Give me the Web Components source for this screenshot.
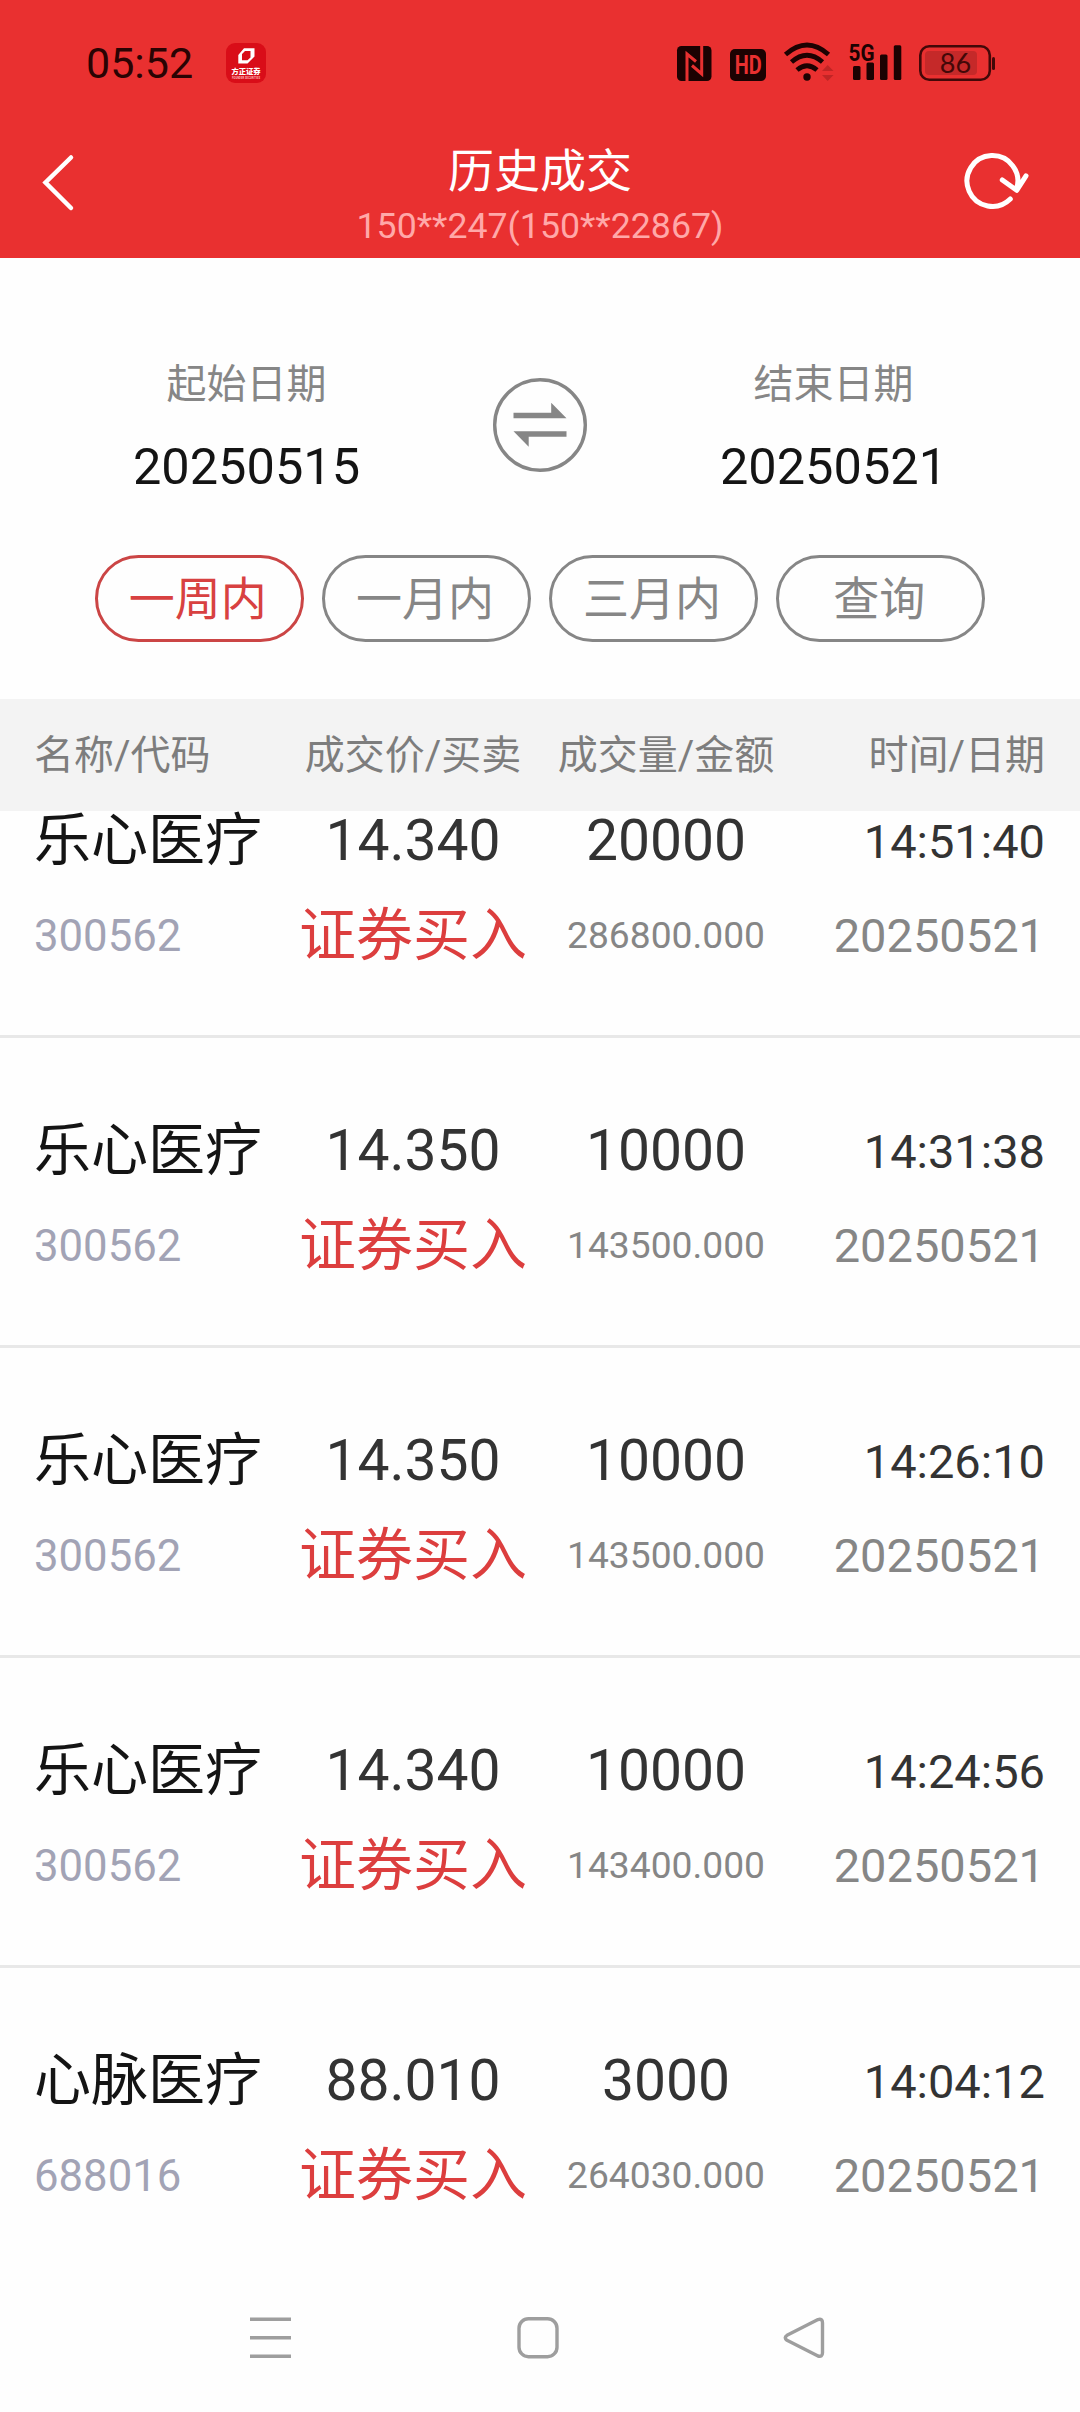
<!DOCTYPE html>
<html lang="zh-CN">
<head>
<meta charset="UTF-8">
<title>历史成交</title>
<style>
    body{
        margin: 0;
        background: #fefefe;
        font-family: Roboto, "Noto Sans CJK SC", sans-serif;
    }
</style>
</head>
<body>
<trade-history></trade-history>

<script>
class BaseElement extends HTMLElement{
    constructor(){
        super();
        this.attachShadow({mode: 'open'});
    }
    connectedCallback(){
        const template = document.createElement('template');
        template.innerHTML = this.getTemplate() + this.getStyles();
        this.shadowRoot.appendChild(template.content.cloneNode(true));
    }
}

class StatusBar extends BaseElement{
    getTemplate(){
        return `
            <time>05:52</time>
            <svg class="app" width="40" height="40" viewBox="0 0 40 40">
                <rect width="40" height="40" rx="9" fill="#d90d18"/>
                <path fill="#fff" fill-rule="evenodd" d="M18 5.300H28.500V13.500L21.500 20.500H12.300V12ZM19 8 16 11V17.300H21.500L24.500 14.500V8Z"/>
                <text x="20" y="31.200" font-size="7.300" font-weight="900" text-anchor="middle" fill="#fff">方正证券</text>
                <text x="20" y="35.500" font-size="2.600" font-weight="700" text-anchor="middle" fill="#fbb" textLength="28">FOUNDER SECURITIES</text>
            </svg>
            <svg class="icons" width="320" height="52" viewBox="676 36 320 52">
                <!-- nfc -->
                <rect x="677" y="45" width="34.500" height="35" rx="4.500" fill="#1c0202"/>
                <path d="M687 80V53L696 60.500M701.700 45V73L692 64.500" fill="none" stroke="#e93030" stroke-width="3"/>
                <!-- hd -->
                <rect x="730" y="48" width="36" height="32" rx="5" fill="#1c0202"/>
                <text x="748.300" y="73" font-size="25" font-weight="700" text-anchor="middle" fill="#e93030" textLength="27" lengthAdjust="spacingAndGlyphs">HD</text>
                <!-- wifi -->
                <g fill="none" stroke="#1c0202" stroke-width="4.800">
                    <path d="M785.500 53.500Q807 34.500 828.500 53.500"/>
                    <path d="M791.500 61Q807 47.500 822.500 61"/>
                    <path d="M797 69Q807 60.500 817 69"/>
                </g>
                <circle cx="807" cy="76" r="3.700" fill="#1c0202"/>
                <path d="M822 70 827.700 64 833.500 70ZM822 74H833.500L827.700 80Z" fill="#c12525"/>
                <!-- signal -->
                <text x="848.500" y="60" font-size="24" font-weight="700" fill="#1c0202" textLength="26" lengthAdjust="spacingAndGlyphs">5G</text>
                <g fill="#1c0202">
                    <rect x="853" y="65" width="7.500" height="14" rx="1.500"/>
                    <rect x="866.500" y="61.500" width="7.500" height="17.500" rx="1.500"/>
                    <rect x="880" y="53.500" width="7.500" height="25.500" rx="1.500"/>
                    <rect x="893.800" y="44.300" width="7.500" height="34.700" rx="1.500"/>
                </g>
                <!-- battery -->
                <rect x="920.300" y="45.200" width="69.500" height="33.500" rx="9" fill="none" stroke="#430808" stroke-width="2.600"/>
                <rect x="925" y="50" width="52" height="24" rx="4" fill="#c52929"/>
                <rect x="992" y="56" width="3" height="13" rx="1.500" fill="#430808"/>
                <text x="955.500" y="72" font-family="Lato" font-size="27" text-anchor="middle" fill="#430808">86</text>
            </svg>
        `;
    }
    getStyles(){
        return `
            <style>
                :host{
                    display: flex;
                    align-items: center;
                    height: 125px;
                    padding: 0 84px 0 86px;
                    box-sizing: border-box;
                }
                time{
                    width: 105px;
                    font-size: 43px;
                    color: #2a0303;
                    white-space: nowrap;
                }
                .app{ margin-left: 35px; }
                .icons{
                    margin-left: auto;
                    overflow: visible;
                }
            </style>
        `;
    }
}

class NavHeader extends BaseElement{
    getTemplate(){
        return `
            <svg width="36" height="60" viewBox="40 152 36 60">
                <path d="M71 157.500 45.500 182.500 71 208" fill="none" stroke="#fff" stroke-width="4.500" stroke-linecap="round"/>
            </svg>
            <div>
                <h1><slot name="title"></slot></h1>
                <p><slot name="account"></slot></p>
            </div>
            <svg width="70" height="62" viewBox="960 152 70 62">
                <path d="M1010.300 199A25.400 25.400 0 1 1 1016.500 189M1002.300 180 1016.700 190.300 1026 175.800" fill="none" stroke="#fff" stroke-width="5" stroke-linecap="round" stroke-linejoin="round"/>
            </svg>
        `;
    }
    getStyles(){
        return `
            <style>
                :host{
                    display: grid;
                    grid-template-columns: 70px 1fr 70px;
                    height: 133px;
                    padding: 0 50px 0 40px;
                    box-sizing: border-box;
                }
                svg{ margin-top: 27px; }
                div{
                    padding: 21px 0 0 10px;
                    text-align: center;
                }
                h1{
                    margin: 0;
                    font-size: 46px;
                    font-weight: 400;
                    line-height: 50px;
                    color: #fff;
                }
                p{
                    margin: 8px 0 0;
                    font-size: 35.700px;
                    line-height: 44px;
                    color: #ffa8a8;
                }
            </style>
        `;
    }
}

class DateField extends BaseElement{
    getTemplate(){
        return `
            <span><slot name="label"></slot></span>
            <strong><slot></slot></strong>
        `;
    }
    getStyles(){
        return `
            <style>
                :host{
                    display: flex;
                    flex-direction: column;
                    align-items: center;
                }
                span{
                    font-size: 40px;
                    line-height: 51px;
                    color: #868686;
                }
                strong{
                    margin-top: 27px;
                    font-size: 50.500px;
                    font-weight: 400;
                    line-height: 60px;
                    color: #141414;
                }
            </style>
        `;
    }
}

class DateRange extends BaseElement{
    getTemplate(){
        return `
            <slot name="start"></slot>
            <svg width="94" height="94" viewBox="493 378 94 94">
                <circle cx="540" cy="425" r="45.300" fill="none" stroke="#868686" stroke-width="3.400"/>
                <path d="M513.500 412.800H551.200V402.800L566.500 418.300H513.500ZM566.500 436.800H528.700V446.800L513.500 431.300H566.500Z" fill="#868686"/>
            </svg>
            <slot name="end"></slot>
        `;
    }
    getStyles(){
        return `
            <style>
                :host{
                    display: grid;
                    grid-template-columns: 493px 94px 493px;
                    padding-top: 101px;
                    height: 297px;
                    box-sizing: border-box;
                }
                svg{ margin-top: 19px; }
            </style>
        `;
    }
}

class RangeTab extends BaseElement{
    getTemplate(){
        return `<slot></slot>`;
    }
    getStyles(){
        return `
            <style>
                :host{
                    display: block;
                    width: 209.500px;
                    height: 87px;
                    padding-right: 3px;
                    box-sizing: border-box;
                    border: 3px solid #868686;
                    border-radius: 44px;
                    text-align: center;
                    font-size: 46px;
                    line-height: 82px;
                    color: #868686;
                }
                :host([active]){
                    border-color: #cb4545;
                    color: #d84141;
                }
            </style>
        `;
    }
}

class TabList extends BaseElement{
    getTemplate(){
        return `<slot></slot>`;
    }
    getStyles(){
        return `
            <style>
                :host{
                    display: flex;
                    justify-content: center;
                    gap: 17.600px;
                    height: 144px;
                }
            </style>
        `;
    }
}

class TableHead extends BaseElement{
    getTemplate(){
        return `
            <span>名称/代码</span>
            <span>成交价/买卖</span>
            <span>成交量/金额</span>
            <span>时间/日期</span>
        `;
    }
    getStyles(){
        return `
            <style>
                :host{
                    display: grid;
                    grid-template-columns: 253px 252px 254px 252px;
                    padding: 0 35px 0 34px;
                    height: 112px;
                    background: #f3f3f3;
                    font-size: 40px;
                    line-height: 114px;
                    color: #7d7d7d;
                    text-align: center;
                    white-space: nowrap;
                }
                span:first-of-type{ text-align: left; }
                span:last-of-type{ text-align: right; }
            </style>
        `;
    }
}

class TradeRow extends BaseElement{
    getTemplate(){
        const get = name => this.getAttribute(name);
        return `
            <span class="name">${get('name')}</span>
            <span class="price">${get('price')}</span>
            <span class="price">${get('volume')}</span>
            <span class="time">${get('time')}</span>
            <span class="code">${get('code')}</span>
            <span class="side">证券买入</span>
            <span class="amount">${get('amount')}</span>
            <span class="date">20250521</span>
        `;
    }
    getStyles(){
        return `
            <style>
                :host{
                    display: grid;
                    grid-template-columns: 253px 252px 254px 252px;
                    grid-template-rows: 95px 95px;
                    height: 310px;
                    padding: 65px 35px 0 34px;
                    box-sizing: border-box;
                    border-bottom: 3px solid #e8e8e8;
                    line-height: 96px;
                    text-align: center;
                    white-space: nowrap;
                }
                .name{ font-size: 57px; color: #141414; text-align: left; }
                .price{ font-size: 57px; color: #333; }
                .time{ font-size: 47px; color: #333; text-align: right; line-height: 97px; }
                .code{ font-size: 43.700px; color: #a2a3b5; text-align: left; }
                .side{ font-size: 57px; color: #dc3e3e; }
                .amount{ font-size: 37.200px; color: #868686; line-height: 94px; }
                .date{ font-size: 47px; color: #868686; text-align: right; }
            </style>
        `;
    }
}

class TradeList extends BaseElement{
    getTemplate(){
        return `<div><slot></slot></div>`;
    }
    getStyles(){
        return `
            <style>
                :host{
                    display: block;
                    height: 1463px;
                    overflow: hidden;
                }
                /* list is scrolled part way into its first row */
                div{ margin-top: -83px; }
            </style>
        `;
    }
}

class SystemNav extends BaseElement{
    getTemplate(){
        return `
            <svg width="44" height="44" viewBox="0 0 44 44">
                <path d="M1 3.300H42M1 21.800H42M1 40.300H42"/>
            </svg>
            <svg width="44" height="44" viewBox="0 0 44 44">
                <rect x="4" y="2.700" width="38" height="38" rx="9.500"/>
            </svg>
            <svg width="44" height="44" viewBox="0 0 44 44">
                <path d="M36 3.600 5 19.300Q1.500 21.800 5 24.300L36 40Q40.500 41.300 40.500 36.800V6.800Q40.500 2.300 36 3.600Z"/>
            </svg>
        `;
    }
    getStyles(){
        return `
            <style>
                :host{
                    display: flex;
                    justify-content: space-between;
                    padding: 41.500px 254px 0 248.500px;
                    height: 138px;
                    box-sizing: border-box;
                }
                svg{
                    fill: none;
                    stroke: #9e9e9e;
                    stroke-width: 3.400;
                    stroke-linejoin: round;
                }
            </style>
        `;
    }
}

class TradeHistory extends BaseElement{
    getTemplate(){
        return `
            <header>
                <status-bar></status-bar>
                <nav-header>
                    <span slot="title">历史成交</span>
                    <span slot="account">150**247(150**22867)</span>
                </nav-header>
            </header>
            <date-range>
                <date-field slot="start"><span slot="label">起始日期</span>20250515</date-field>
                <date-field slot="end"><span slot="label">结束日期</span>20250521</date-field>
            </date-range>
            <tab-list>
                <range-tab active>一周内</range-tab>
                <range-tab>一月内</range-tab>
                <range-tab>三月内</range-tab>
                <range-tab>查询</range-tab>
            </tab-list>
            <table-head></table-head>
            <trade-list>
                <trade-row name="乐心医疗" code="300562" price="14.340" volume="20000" amount="286800.000" time="14:51:40"></trade-row>
                <trade-row name="乐心医疗" code="300562" price="14.350" volume="10000" amount="143500.000" time="14:31:38"></trade-row>
                <trade-row name="乐心医疗" code="300562" price="14.350" volume="10000" amount="143500.000" time="14:26:10"></trade-row>
                <trade-row name="乐心医疗" code="300562" price="14.340" volume="10000" amount="143400.000" time="14:24:56"></trade-row>
                <trade-row name="心脉医疗" code="688016" price="88.010" volume="3000" amount="264030.000" time="14:04:12"></trade-row>
            </trade-list>
            <system-nav></system-nav>
        `;
    }
    getStyles(){
        return `
            <style>
                :host{
                    display: block;
                    width: 1080px;
                    height: 2412px;
                    overflow: hidden;
                }
                header{ background: #e93030; }
            </style>
        `;
    }
}

customElements.define('status-bar', StatusBar);
customElements.define('nav-header', NavHeader);
customElements.define('date-field', DateField);
customElements.define('date-range', DateRange);
customElements.define('range-tab', RangeTab);
customElements.define('tab-list', TabList);
customElements.define('table-head', TableHead);
customElements.define('trade-row', TradeRow);
customElements.define('trade-list', TradeList);
customElements.define('system-nav', SystemNav);
customElements.define('trade-history', TradeHistory);
</script>
</body>
</html>
